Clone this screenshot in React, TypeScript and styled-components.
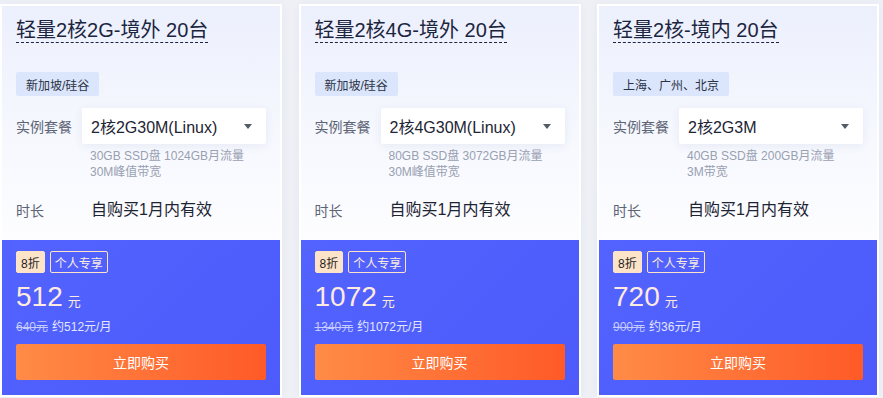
import { FC } from "react";
import styled, { createGlobalStyle } from "styled-components";

const GlobalStyle = createGlobalStyle`
  body {
    margin: 0;
    background: #eef0f6;
    font-family: "Liberation Sans", "Noto Sans CJK SC", sans-serif;
  }
`;

const Page = styled.div`
  display: grid;
  grid-template-columns: repeat(3, 282px);
  column-gap: 16.5px;
  padding-top: 4px;
`;

const Card = styled.div`
  height: 393px;
  box-sizing: border-box;
  border: 2px solid #fff;
  background: #fff;
  display: flex;
  flex-direction: column;
  box-shadow: 0 0 10px rgba(40, 60, 120, 0.04);
`;

const Top = styled.div`
  height: 234px;
  box-sizing: border-box;
  padding: 12px 14px 0;
  background: linear-gradient(180deg, #ecf0fd 0%, #f6f8fe 55%, #fdfdff 100%);
`;

const Title = styled.h3`
  display: inline-block;
  margin: 0;
  font-size: 20px;
  line-height: 24px;
  font-weight: normal;
  color: #1c2540;
  border-bottom: 1px dashed #1c2540;
`;

const Region = styled.div`
  margin-top: 29px;
  display: inline-flex;
  align-items: center;
  height: 24px;
  padding: 0 10px;
  border-radius: 2px;
  background: #dbe5fb;
  font-size: 12px;
  color: #2a3246;
`;

const Row = styled.div`
  display: flex;
  align-items: center;
  margin-top: ${({ $gap }: { $gap: number }) => $gap}px;
`;

const Label = styled.span`
  width: 66px;
  flex-shrink: 0;
  font-size: 14px;
  color: #5d6475;
`;

const Select = styled.div`
  flex: 1;
  height: 36px;
  display: flex;
  align-items: center;
  justify-content: space-between;
  padding: 0 14px 0 9px;
  background: #fff;
  border-radius: 2px;
  box-shadow: 0 2px 10px rgba(50, 70, 140, 0.08);
  font-size: 16px;
  color: #1d2433;
`;

const Caret = styled.span`
  width: 0;
  height: 0;
  border-left: 4px solid transparent;
  border-right: 4px solid transparent;
  border-top: 5px solid #555b66;
`;

const Desc = styled.div`
  margin: 4px 0 0 74px;
  font-size: 12px;
  line-height: 16px;
  color: #98a0b2;
`;

const Value = styled.span`
  padding-left: 9px;
  font-size: 16px;
  line-height: 24px;
  color: #1d2433;
`;

const Bottom = styled.div`
  flex: 1;
  padding: 11px 14px 0;
  background: linear-gradient(135deg, #5263ff 0%, #4c5bfa 100%);
`;

const Badges = styled.div`
  display: flex;
  gap: 5px;
`;

const Badge = styled.span<{ $solid?: boolean }>`
  height: 22px;
  box-sizing: border-box;
  display: inline-flex;
  align-items: center;
  padding: 0 4px;
  font-size: 12px;
  border: 1px solid #fde3c8;
  border-radius: 2px;
  background: ${({ $solid }) => ($solid ? "#fde3c8" : "transparent")};
  color: ${({ $solid }) => ($solid ? "#1f1f1f" : "#fdeede")};
`;

const Price = styled.div`
  margin-top: 8px;
  line-height: 32px;
  color: #ffeadf;
`;

const Amount = styled.span`
  font-size: 28px;
`;

const Unit = styled.span`
  margin-left: 5px;
  font-size: 13px;
`;

const Monthly = styled.div`
  font-size: 12px;
  line-height: 18px;
  color: #e4e7ff;

  s {
    color: #c6ccff;
    margin-right: 4px;
  }
`;

const BuyButton = styled.button`
  margin-top: 8px;
  width: 100%;
  height: 36px;
  border: none;
  border-radius: 2px;
  background: linear-gradient(90deg, #ff8b47 0%, #ff5a27 100%);
  color: #fff;
  font-family: inherit;
  font-size: 14px;
  cursor: pointer;
`;

interface IPlan {
  title: string;
  region: string;
  spec: string;
  desc: string[];
  price: number;
  original: number;
  monthly: number;
}

const plans: IPlan[] = [
  {
    title: "轻量2核2G-境外 20台",
    region: "新加坡/硅谷",
    spec: "2核2G30M(Linux)",
    desc: ["30GB SSD盘 1024GB月流量", "30M峰值带宽"],
    price: 512,
    original: 640,
    monthly: 512,
  },
  {
    title: "轻量2核4G-境外 20台",
    region: "新加坡/硅谷",
    spec: "2核4G30M(Linux)",
    desc: ["80GB SSD盘 3072GB月流量", "30M峰值带宽"],
    price: 1072,
    original: 1340,
    monthly: 1072,
  },
  {
    title: "轻量2核-境内 20台",
    region: "上海、广州、北京",
    spec: "2核2G3M",
    desc: ["40GB SSD盘 200GB月流量", "3M带宽"],
    price: 720,
    original: 900,
    monthly: 36,
  },
];

const PlanCard: FC<{ plan: IPlan }> = ({ plan }) => (
  <Card>
    <Top>
      <Title>{plan.title}</Title>
      <div>
        <Region>{plan.region}</Region>
      </div>
      <Row $gap={12}>
        <Label>实例套餐</Label>
        <Select>
          {plan.spec}
          <Caret />
        </Select>
      </Row>
      <Desc>
        {plan.desc.map((line) => (
          <div key={line}>{line}</div>
        ))}
      </Desc>
      <Row $gap={18}>
        <Label>时长</Label>
        <Value>自购买1月内有效</Value>
      </Row>
    </Top>
    <Bottom>
      <Badges>
        <Badge $solid>8折</Badge>
        <Badge>个人专享</Badge>
      </Badges>
      <Price>
        <Amount>{plan.price}</Amount>
        <Unit>元</Unit>
      </Price>
      <Monthly>
        <s>{plan.original}元</s>约{plan.monthly}元/月
      </Monthly>
      <BuyButton>立即购买</BuyButton>
    </Bottom>
  </Card>
);

const App: FC = () => (
  <>
    <GlobalStyle />
    <Page>
      {plans.map((plan) => (
        <PlanCard key={plan.title} plan={plan} />
      ))}
    </Page>
  </>
);

export default App;
